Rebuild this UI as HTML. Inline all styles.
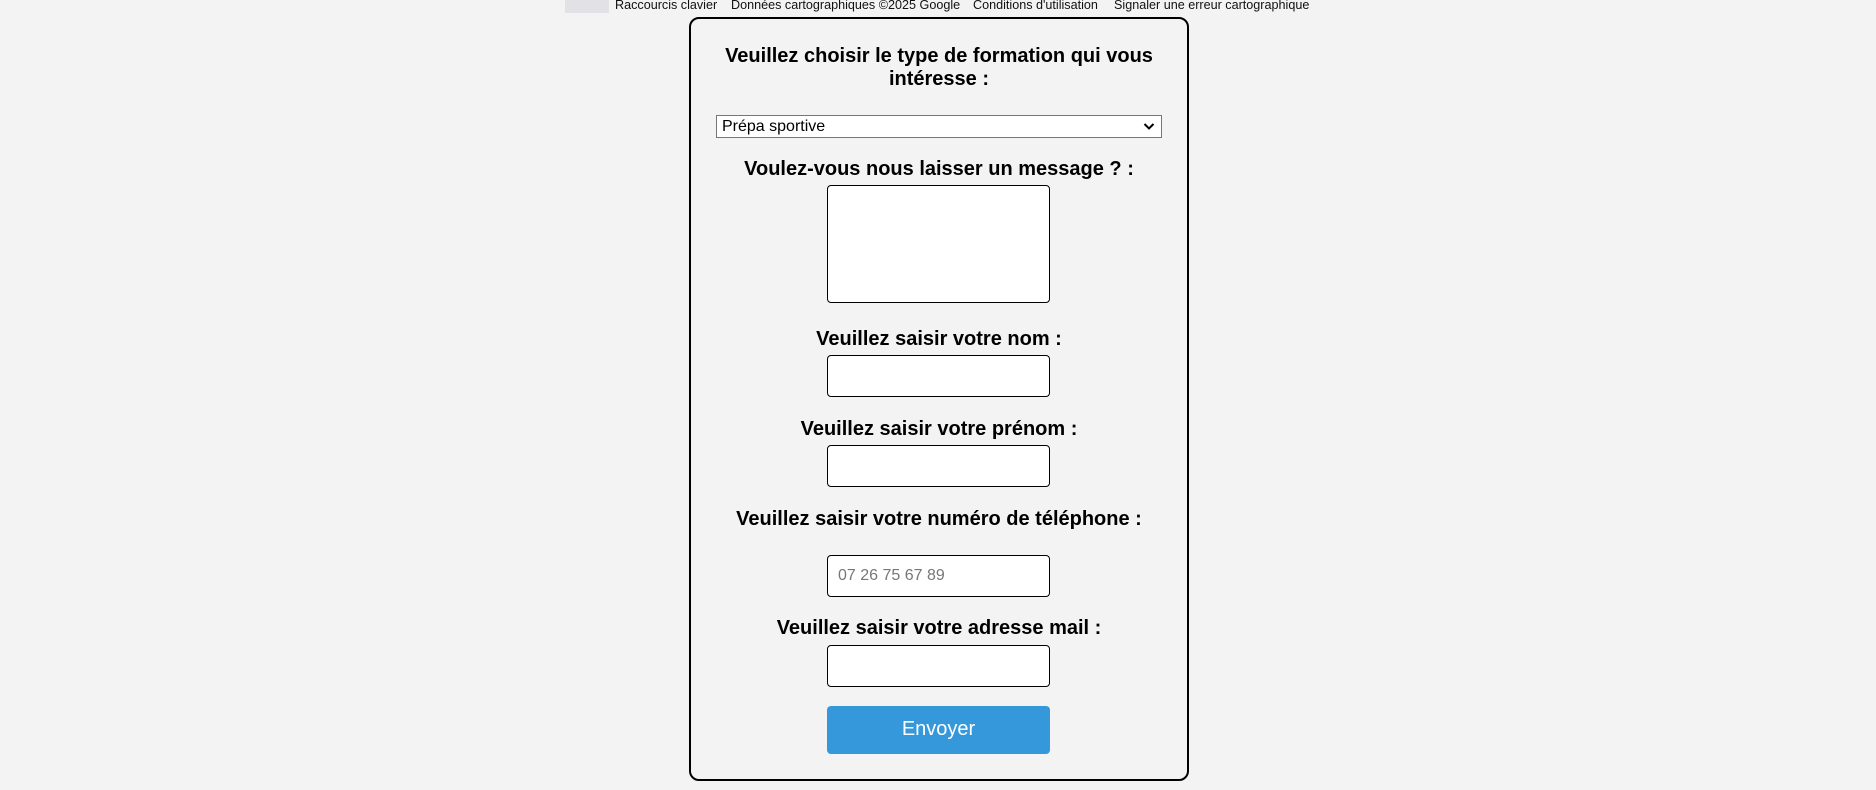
<!DOCTYPE html>
<html><head><meta charset="utf-8"><style>
body{margin:0;width:1876px;height:790px;background:#f3f3f3;font-family:"Liberation Sans",Arial,sans-serif;position:relative;overflow:hidden}
.a{position:absolute}
.top{top:-2px;font-size:12.6px;color:#111;white-space:nowrap}
.card{left:689px;top:17px;width:500px;height:764px;border:2px solid #000;border-radius:10px;box-sizing:border-box}
.lbl{left:689px;width:500px;text-align:center;font-weight:bold;font-size:20px;line-height:23px;color:#000}
.inp{left:827px;width:223px;height:42px;box-sizing:border-box;border:1px solid #000;border-radius:4px;background:#fff}
</style></head><body>
<div class="a" style="left:565px;top:0;width:44px;height:13px;background:#e2e2e6"></div>
<div class="a top" style="left:615px">Raccourcis clavier</div>
<div class="a top" style="left:731px">Données cartographiques ©2025 Google</div>
<div class="a top" style="left:973px">Conditions d'utilisation</div>
<div class="a top" style="left:1114px">Signaler une erreur cartographique</div>
<div class="a card"></div>
<div class="a lbl" style="top:45px">Veuillez choisir le type de formation qui vous<br>intéresse :</div>
<div class="a" style="left:716px;top:115px;width:446px;height:23px;box-sizing:border-box;border:1px solid #767676;background:#fff;font-size:16px;line-height:21px;padding-left:5px">Prépa sportive
<svg class="a" style="right:6px;top:6px" width="12" height="9" viewBox="0 0 12 9"><path d="M1.5 2l4.5 4.5 4.5-4.5" fill="none" stroke="#000" stroke-width="2"/></svg></div>
<div class="a lbl" style="top:158px">Voulez-vous nous laisser un message ? :</div>
<div class="a inp" style="top:185px;height:118px"></div>
<div class="a lbl" style="top:328px">Veuillez saisir votre nom :</div>
<div class="a inp" style="top:355px"></div>
<div class="a lbl" style="top:418px">Veuillez saisir votre prénom :</div>
<div class="a inp" style="top:445px"></div>
<div class="a lbl" style="top:508px">Veuillez saisir votre numéro de téléphone :</div>
<div class="a inp" style="top:555px;font-size:16px;color:#777;line-height:40px;padding-left:10px">07 26 75 67 89</div>
<div class="a lbl" style="top:617px">Veuillez saisir votre adresse mail :</div>
<div class="a inp" style="top:645px"></div>
<div class="a" style="left:827px;top:706px;width:223px;height:48px;background:#3498db;border-radius:4px;color:#fff;font-size:20px;text-align:center;line-height:47px">Envoyer</div>
</body></html>
